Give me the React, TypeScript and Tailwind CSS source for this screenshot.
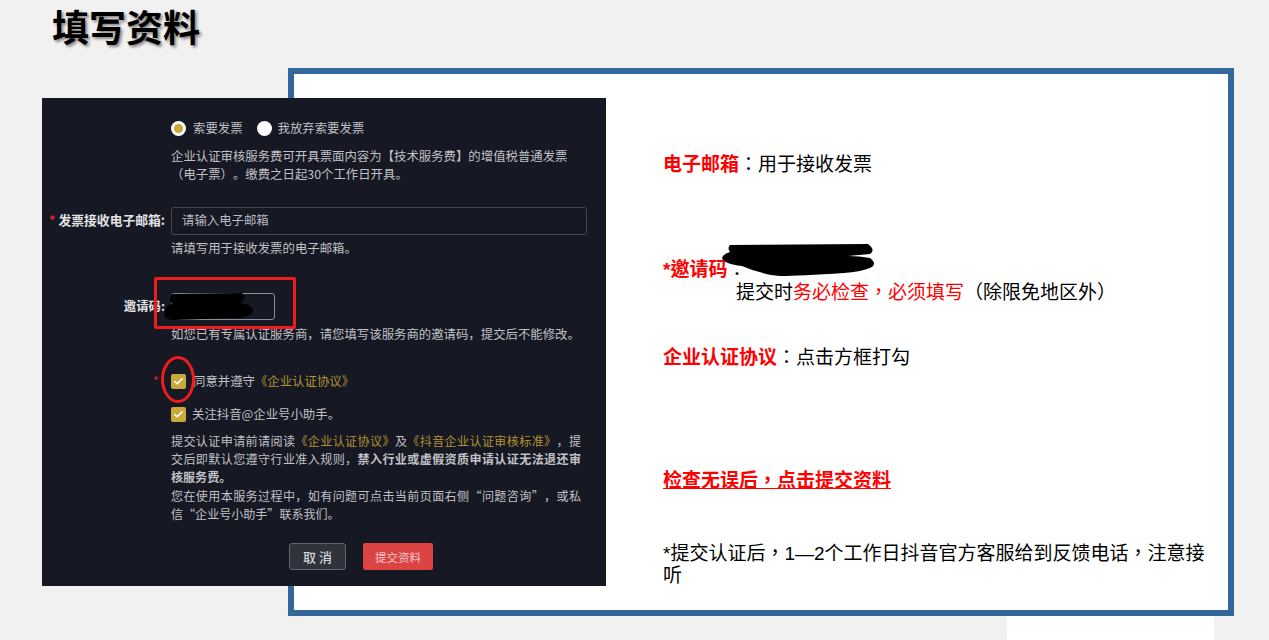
import { Check } from "lucide-react";

function CheckBox() {
  return (
    <span className="flex h-[15px] w-[15px] shrink-0 items-center justify-center rounded-[2px] bg-[#c9a93a]">
      <Check size={11} strokeWidth={3.5} className="text-white" />
    </span>
  );
}

function FormPanel() {
  return (
    <div className="absolute left-[42px] top-[98px] h-[488px] w-[564px] bg-[#161823] pl-[129px] pr-[19px] font-['Noto_Sans_CJK_SC',sans-serif] text-[12.4px] leading-[18px] text-[#c0c1c6] [text-spacing-trim:space-all]">
      <div className="mt-[21px] flex h-[18px] items-center">
        <span className="flex h-[15px] w-[15px] items-center justify-center rounded-full bg-white">
          <span className="h-[9px] w-[9px] rounded-full bg-[#c9a93a]" />
        </span>
        <span className="ml-[7px]">索要发票</span>
        <span className="ml-[14px] h-[15px] w-[15px] rounded-full bg-white" />
        <span className="ml-[6px]">我放弃索要发票</span>
      </div>
      <p className="mt-[10px]">
        企业认证审核服务费可开具票面内容为【技术服务费】的增值税普通发票（电子票）。缴费之日起30个工作日开具。
      </p>

      <div className="relative mt-[24px] flex h-[28px] w-[416px] items-center rounded-[3px] border border-[#45464f] pb-[2px] pl-[10px] text-[#b9bac0]">
        请输入电子邮箱
        <span className="absolute right-[421px] whitespace-nowrap text-[12.8px] font-bold text-[#e3e3e6]">
          <span className="mr-[3px] text-[#d92b2b]">*</span>发票接收电子邮箱:
        </span>
      </div>
      <p className="mt-[4px]">请填写用于接收发票的电子邮箱。</p>

      <div className="relative mt-[36px] h-[27px] w-[104px] rounded-[3px] border border-[#8d8e94]">
        <span className="absolute right-[109px] top-[3px] whitespace-nowrap font-bold text-[#e3e3e6]">
          邀请码:
        </span>
      </div>
      <p className="mt-[5px]">如您已有专属认证服务商，请您填写该服务商的邀请码，提交后不能修改。</p>

      <div className="relative mt-[29px] flex h-[18px] items-center gap-[7px]">
        <span className="absolute -left-[18px] top-0 text-[#d92b2b]">*</span>
        <CheckBox />
        <span>
          同意并遵守<span className="text-[#b1922f]">《企业认证协议》</span>
        </span>
      </div>
      <div className="mt-[15px] flex h-[18px] items-center gap-[6px]">
        <CheckBox />
        <span>关注抖音@企业号小助手。</span>
      </div>

      <div className="mt-[9px] w-[410px] text-[12.05px] leading-[18.2px]">
        <p className="whitespace-nowrap [text-align-last:justify]">
          提交认证申请前请阅读<span className="text-[#b1922f]">《企业认证协议》</span>及
          <span className="text-[#b1922f]">《抖音企业认证审核标准》</span>，提
        </p>
        <p className="whitespace-nowrap [text-align-last:justify]">
          交后即默认您遵守行业准入规则，<span className="font-bold">禁入行业或虚假资质申请认证无法退还审</span>
        </p>
        <p className="font-bold">核服务费。</p>
        <p className="whitespace-nowrap [text-align-last:justify]">
          您在使用本服务过程中，如有问题可点击当前页面右侧“问题咨询”，或私
        </p>
        <p>信“企业号小助手”联系我们。</p>
      </div>

      <div className="mt-[20px] flex items-center">
        <button className="ml-[118px] h-[27px] w-[57px] rounded-[3px] border border-[#62636b] bg-[#30323c] text-[13px] font-medium text-[#d4d4d8]">
          取 消
        </button>
        <button className="ml-[17px] h-[27px] w-[70px] rounded-[2px] bg-[#dc4343] text-[11.5px] text-[#f3c9c9]">
          提交资料
        </button>
      </div>
    </div>
  );
}

export default function App() {
  return (
    <div className="relative h-[640px] w-[1269px] overflow-hidden bg-[#f1f1f1] font-['Liberation_Sans','Noto_Sans_CJK_SC',sans-serif]">
      <h1 className="h-[68px] pl-[52px] pt-[7px] text-[37px] font-bold leading-[46px] text-black [text-shadow:2px_2px_3px_rgba(0,0,0,0.45)]">
        填写资料
      </h1>

      <div className="ml-[288px] h-[548px] w-[946px] border-[6px] border-[#336699] bg-white pl-[369px] pr-[22px] font-['Liberation_Sans','Noto_Sans_CJK_TC',sans-serif] text-[19px] text-black [text-spacing-trim:space-all]">
        <p className="mt-[78px] h-[26px] leading-[26px]">
          <span className="font-bold text-[#ff0000]">电子邮箱</span>：用于接收发票
        </p>
        <p className="mt-[79px] h-[26px] leading-[26px]">
          <span className="font-bold text-[#ff0000]">*邀请码</span>：
        </p>
        <p className="-mt-[3px] h-[26px] pl-[73px] leading-[26px]">
          提交时<span className="text-[#ff0000]">务必检查，必须填写</span>（除限免地区外）
        </p>
        <p className="mt-[39px] h-[26px] leading-[26px]">
          <span className="font-bold text-[#ff0000]">企业认证协议</span>：点击方框打勾
        </p>
        <p className="mt-[97px] h-[26px] font-bold leading-[26px] text-[#ff0000] underline">
          检查无误后，点击提交资料
        </p>
        <p className="mt-[49px] leading-[22px]">*提交认证后，1—2个工作日抖音官方客服给到反馈电话，注意接听</p>
      </div>

      <div className="ml-[1007px] h-[30px] w-[207px] bg-white" />

      <FormPanel />

      {/* red markers and black scribbles painted over the screenshot */}
      <div className="absolute left-[154px] top-[277px] h-[52px] w-[142px] rounded-[2px] border-[3px] border-[#ee1c1c]" />
      <div className="absolute left-[161px] top-[356px] h-[47px] w-[34px] rounded-[50%] border-[3px] border-[#ee1c1c]" />
      <svg className="absolute left-[160px] top-[288px]" width="100" height="36" viewBox="0 0 100 36">
        <path
          d="M12 6 L82 5 Q88 10 80 15 Q94 17 93 24 Q88 31 70 30 L14 32 Q3 32 5 25 Q4 18 12 16 Q8 10 12 6 Z"
          fill="#000"
        />
      </svg>
      <svg className="absolute left-[720px] top-[242px]" width="156" height="40" viewBox="0 0 156 40">
        <path
          d="M10 3 L148 2 Q156 8 150 12 L128 14 Q140 14 150 16 Q158 22 150 26 Q140 30 124 31 Q80 34 60 34 Q40 32 22 24 Q4 22 2 16 Q4 11 10 10 Q7 6 10 3 Z"
          fill="#000"
        />
      </svg>
    </div>
  );
}
